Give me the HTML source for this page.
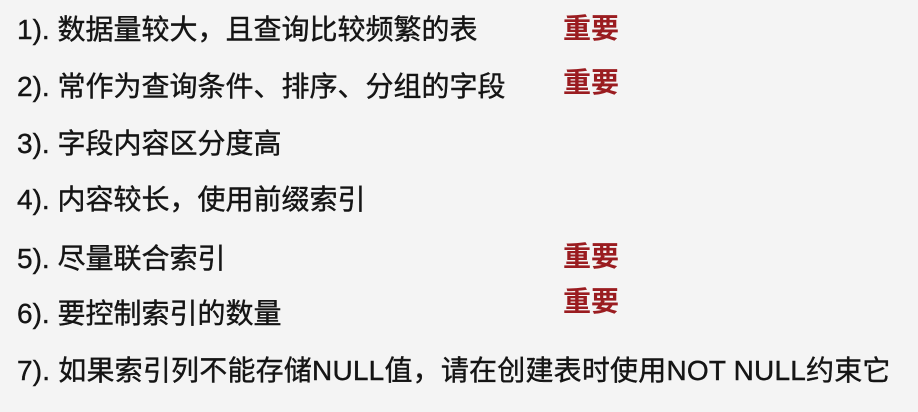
<!DOCTYPE html>
<html><head><meta charset="utf-8"><style>
body{margin:0;width:918px;height:412px;background:#f4f4f4;overflow:hidden;position:relative;font-family:"Liberation Sans","Noto Sans CJK SC",sans-serif;}
.l{position:absolute;left:17px;font-size:28px;color:#151515;line-height:1;white-space:nowrap;-webkit-text-stroke:0.4px #151515;}
.r{position:absolute;left:563px;font-size:28px;color:#9a1c20;font-weight:bold;line-height:1;}
</style></head><body>
<div class="l" style="top:16px">1). 数据量较大，且查询比较频繁的表</div>
<div class="r" style="top:15px">重要</div>
<div class="l" style="top:73px">2). 常作为查询条件、排序、分组的字段</div>
<div class="r" style="top:69px">重要</div>
<div class="l" style="top:130px">3). 字段内容区分度高</div>
<div class="l" style="top:186px">4). 内容较长，使用前缀索引</div>
<div class="l" style="top:245px">5). 尽量联合索引</div>
<div class="r" style="top:243px">重要</div>
<div class="l" style="top:300px">6). 要控制索引的数量</div>
<div class="r" style="top:288px">重要</div>
<div class="l" style="top:357px;letter-spacing:0.2px">7). 如果索引列不能存储NULL值，请在创建表时使用NOT NULL约束它</div>
</body></html>
